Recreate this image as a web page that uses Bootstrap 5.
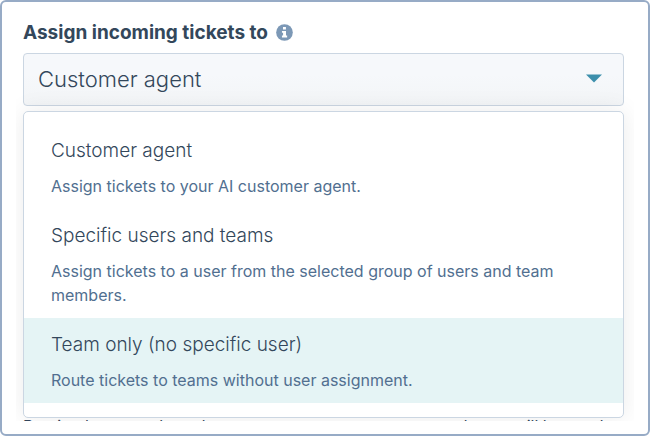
<!DOCTYPE html>
<html lang="en">
<head>
<meta charset="utf-8">
<meta name="viewport" content="width=device-width, initial-scale=1">
<title>Assign incoming tickets</title>
<link href="https://cdn.jsdelivr.net/npm/bootstrap@5.3.0/dist/css/bootstrap.min.css" rel="stylesheet">
<style>
body{font-family:Inter,"Liberation Sans",sans-serif;color:#33475b;font-size:16px;line-height:24px}
.frame{border:2px solid #97abc6;border-radius:6px;padding:14px 14px 13px}
.pane{padding:0 10px 0 7px}
.field-label{font-size:19px;font-weight:700;line-height:33px}
.picker{height:53px;padding:0 50px 0 14px;font-size:22px;font-weight:300;color:#33475b;border:1px solid #cbd6e2;border-radius:4px;background:linear-gradient(#f6f8fb 40%,#f3f5f7)}
.picker-wrap .caret{position:absolute;right:22px;top:21px;pointer-events:none}
.options{border:1px solid #cbd6e2;border-radius:5px;padding:12px 0 14px;margin-top:5px;box-shadow:0 0 24px rgba(0,0,0,.08)}
.option{background:#fff;padding:15px 28px 11px 27px;color:#33475b}
.option:hover,.option.current{background:#e5f4f5}
.option-title{font-size:19px;font-weight:300;margin-bottom:11px}
.option-note{color:#516f90}
.peek{height:3px;line-height:16px}
</style>
<script src="https://cdn.jsdelivr.net/npm/bootstrap@5.3.0/dist/js/bootstrap.bundle.min.js"></script>
</head>
<body class="bg-white">
<main class="frame bg-white">
  <div class="pane overflow-hidden">
    <div class="d-flex align-items-center gap-2 mb-1">
      <label class="field-label" for="assign">Assign incoming tickets to</label>
      <button type="button" class="btn p-0 border-0 d-flex" aria-label="More information">
        <svg width="17" height="17" viewBox="0 0 18 18"><circle cx="9" cy="9" r="8.8" fill="#7c98b6"/><path d="M7.4 3.2h3.1v2.6H7.4zM6.3 7.3h4.3v5h1.2v1.9H6.3v-1.9h1.2V9.2H6.3z" fill="#fff"/></svg>
      </button>
    </div>
    <div class="picker-wrap position-relative">
      <select id="assign" class="picker w-100 form-control">
        <option>Customer agent</option>
        <option>Specific users and teams</option>
        <option>Team only (no specific user)</option>
      </select>
      <svg class="caret" width="16" height="9" viewBox="0 0 16 9"><path d="M0 .5h16L8 8.5z" fill="#3d8fac"/></svg>
    </div>
    <div class="options bg-white position-relative" role="listbox" aria-label="Assign incoming tickets to">
      <button type="button" role="option" class="option d-block w-100 border-0 text-start">
        <span class="option-title d-block">Customer agent</span>
        <span class="option-note d-block">Assign tickets to your AI customer agent.</span>
      </button>
      <button type="button" role="option" class="option d-block w-100 border-0 text-start">
        <span class="option-title d-block">Specific users and teams</span>
        <span class="option-note d-block">Assign tickets to a user from the selected group of users and team members.</span>
      </button>
      <button type="button" role="option" class="option current d-block w-100 border-0 text-start">
        <span class="option-title d-block">Team only (no specific user)</span>
        <span class="option-note d-block">Route tickets to teams without user assignment.</span>
      </button>
    </div>
    <div class="peek overflow-hidden text-nowrap">Routing becomes based on zones or a common queue and zone will be used</div>
  </div>
</main>
</body>
</html>
